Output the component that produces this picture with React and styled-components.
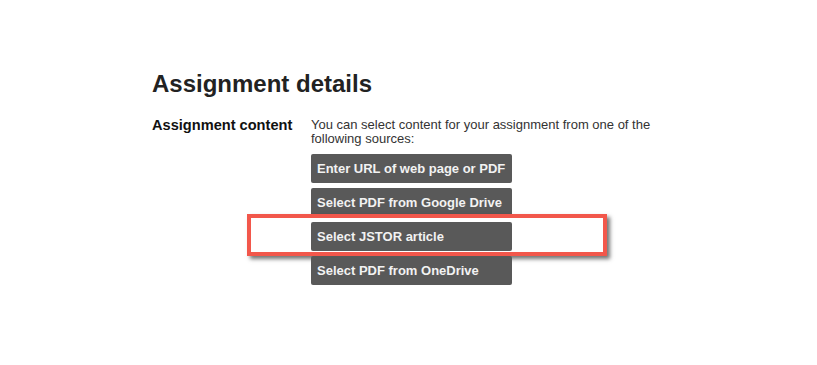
import React from 'react'
import styled, { createGlobalStyle } from 'styled-components'

const GlobalStyle = createGlobalStyle`
	body {
		margin: 0;
		background: #fff;
		font-family: "Liberation Sans", Arial, sans-serif;
		color: #222;
	}
`

const Page = styled.div`
	width: 817px;
	height: 365px;
	padding: 70px 0 0 152px;
	box-sizing: border-box;
`

const Heading = styled.h1`
	margin: 0 0 20px;
	font-size: 24px;
	line-height: 28px;
	font-weight: bold;
	color: #222;
`

const Row = styled.div`
	display: flex;
	align-items: flex-start;
`

const Label = styled.div`
	width: 159px;
	font-size: 14.6px;
	font-weight: bold;
	line-height: 15px;
	color: #111;
`

const Content = styled.div`
	display: flex;
	flex-direction: column;
	align-items: flex-start;
	width: 360px;
`

const Intro = styled.p`
	margin: 0 0 8px;
	font-size: 13px;
	line-height: 14px;
	color: #333;
`

const SourceList = styled.div`
	display: flex;
	flex-direction: column;
	align-items: flex-start;
	gap: 5px;
`

const Holder = styled.div`
	position: relative;
`

const SourceButton = styled.button`
	display: block;
	box-sizing: border-box;
	width: 201px;
	height: 29px;
	padding: 0 6px;
	border: none;
	border-radius: 2px;
	background: #595959;
	color: #f2f2f2;
	font-family: "Liberation Sans", Arial, sans-serif;
	font-size: 13px;
	font-weight: bold;
	text-align: left;
	white-space: nowrap;
	cursor: pointer;
`

const Highlight = styled.div`
	position: absolute;
	left: -64px;
	top: -8px;
	width: 360px;
	height: 42px;
	box-sizing: border-box;
	border: 4px solid #f2574b;
	box-shadow: 3px 3px 4px rgba(0, 0, 0, 0.55);
	pointer-events: none;
`

const sources = [
	{ label: 'Enter URL of web page or PDF' },
	{ label: 'Select PDF from Google Drive' },
	{ label: 'Select JSTOR article', marked: true },
	{ label: 'Select PDF from OneDrive' },
]

export default function App() {
	return (
		<>
			<GlobalStyle />
			<Page>
				<Heading>Assignment details</Heading>
				<Row>
					<Label>Assignment content</Label>
					<Content>
						<Intro>
							You can select content for your assignment from one of the following sources:
						</Intro>
						<SourceList>
							{sources.map((s) => (
								<Holder key={s.label}>
									<SourceButton>{s.label}</SourceButton>
									{s.marked && <Highlight />}
								</Holder>
							))}
						</SourceList>
					</Content>
				</Row>
			</Page>
		</>
	)
}
